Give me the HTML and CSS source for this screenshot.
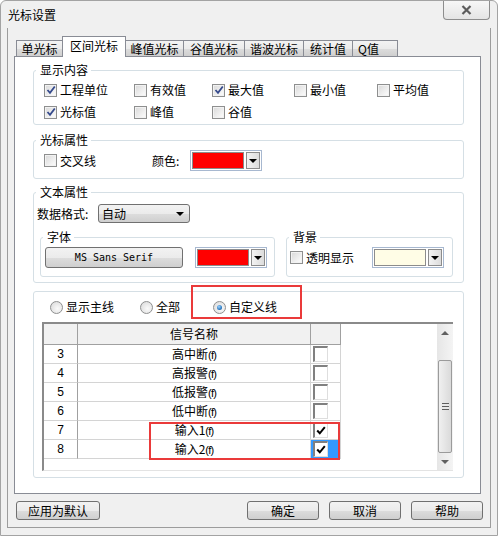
FILE: index.html
```html
<!DOCTYPE html>
<html lang="zh-CN">
  <head>
    <meta charset="UTF-8" />
    <title>光标设置</title>
    <link rel="stylesheet" href="styles.css">
  </head>
  <body>
    <div class="window">
      <div class="titlebar">
        <span class="title">光标设置</span>
        <button class="close-btn" type="button">
          <svg width="11" height="10" viewBox="0 0 11 10">
            <path d="M1.5 1 L9.5 9 M9.5 1 L1.5 9" stroke="#5c5c5c" stroke-width="2.2" fill="none" />
          </svg>
        </button>
      </div>

      <div class="client">
        <div class="tabs">
          <div class="tab tab-single">单光标</div>
          <div class="tab tab-range active">区间光标</div>
          <div class="tab tab-peak">峰值光标</div>
          <div class="tab tab-valley">谷值光标</div>
          <div class="tab tab-harm">谐波光标</div>
          <div class="tab tab-stat">统计值</div>
          <div class="tab tab-q">Q值</div>
        </div>

        <div class="panel">
          <!-- 显示内容 -->
          <div class="group group-show">
            <div class="group-title">显示内容</div>
            <div class="check-grid">
              <label class="check"><span class="cb checked"></span>工程单位</label>
              <label class="check"><span class="cb"></span>有效值</label>
              <label class="check"><span class="cb checked"></span>最大值</label>
              <label class="check"><span class="cb"></span>最小值</label>
              <label class="check"><span class="cb"></span>平均值</label>
              <label class="check"><span class="cb checked"></span>光标值</label>
              <label class="check"><span class="cb"></span>峰值</label>
              <label class="check"><span class="cb"></span>谷值</label>
            </div>
          </div>

          <!-- 光标属性 -->
          <div class="group group-cursor">
            <div class="group-title">光标属性</div>
            <div class="attr-row">
              <label class="check check-cross"><span class="cb"></span>交叉线</label>
              <span class="color-label">颜色:</span>
              <div class="color-combo">
                <span class="swatch swatch-red"></span>
                <span class="drop"><span class="tri"></span></span>
              </div>
            </div>
          </div>

          <!-- 文本属性 -->
          <div class="group group-text">
            <div class="group-title">文本属性</div>
            <div class="format-row">
              <span class="format-label">数据格式:</span>
              <div class="select">
                <span>自动</span>
                <span class="tri"></span>
              </div>
            </div>
            <div class="sub-row">
              <div class="group sub-font">
                <div class="group-title">字体</div>
                <div class="sub-body">
                  <button class="font-btn" type="button">MS Sans Serif</button>
                  <div class="color-combo combo-font">
                    <span class="swatch swatch-red"></span>
                    <span class="drop"><span class="tri"></span></span>
                  </div>
                </div>
              </div>
              <div class="group sub-bg">
                <div class="group-title">背景</div>
                <div class="sub-body">
                  <label class="check check-trans"><span class="cb"></span>透明显示</label>
                  <div class="color-combo combo-bg">
                    <span class="swatch swatch-yellow"></span>
                    <span class="drop"><span class="tri"></span></span>
                  </div>
                </div>
              </div>
            </div>
          </div>

          <!-- 信号列表 -->
          <div class="group group-lines">
            <div class="radio-row">
              <label class="radio-item r-main"><span class="radio"></span>显示主线</label>
              <label class="radio-item r-all"><span class="radio"></span>全部</label>
              <label class="radio-item"><span class="radio selected"></span>自定义线</label>
            </div>
            <div class="grid">
              <table class="signals">
                <colgroup>
                  <col class="c-num" />
                  <col class="c-name" />
                  <col class="c-chk" />
                </colgroup>
                <thead>
                  <tr>
                    <th></th>
                    <th>信号名称</th>
                    <th></th>
                  </tr>
                </thead>
                <tbody>
                  <tr>
                    <td class="num">3</td>
                    <td>高中断<span class="fx">(f)</span></td>
                    <td class="chk"><span class="gcb"></span></td>
                  </tr>
                  <tr>
                    <td class="num">4</td>
                    <td>高报警<span class="fx">(f)</span></td>
                    <td class="chk"><span class="gcb"></span></td>
                  </tr>
                  <tr>
                    <td class="num">5</td>
                    <td>低报警<span class="fx">(f)</span></td>
                    <td class="chk"><span class="gcb"></span></td>
                  </tr>
                  <tr>
                    <td class="num">6</td>
                    <td>低中断<span class="fx">(f)</span></td>
                    <td class="chk"><span class="gcb"></span></td>
                  </tr>
                  <tr>
                    <td class="num">7</td>
                    <td>输入1<span class="fx">(f)</span></td>
                    <td class="chk"><span class="gcb on"></span></td>
                  </tr>
                  <tr>
                    <td class="num">8</td>
                    <td>输入2<span class="fx">(f)</span></td>
                    <td class="chk current"><span class="gcb on"></span></td>
                  </tr>
                </tbody>
              </table>
              <div class="grid-space"></div>
              <div class="scrollbar">
                <div class="sb-btn"><span class="sb-up"></span></div>
                <div class="sb-track">
                  <div class="sb-thumb"><span class="grip"></span></div>
                </div>
                <div class="sb-btn"><span class="sb-down"></span></div>
              </div>
            </div>
          </div>
        </div>

        <div class="buttons">
          <button class="btn btn-default" type="button">应用为默认</button>
          <button class="btn btn-ok" type="button">确定</button>
          <button class="btn" type="button">取消</button>
          <button class="btn" type="button">帮助</button>
        </div>
      </div>

      <div class="mark mark-radio"></div>
      <div class="mark mark-rows"></div>
    </div>
  </body>
</html>
```

FILE: styles.css
```css
* {
  box-sizing: border-box;
}

body {
  margin: 0;
  font-family: "Noto Sans CJK SC", "Liberation Sans", sans-serif;
  font-size: 12px;
  line-height: 14px;
  color: #000;
  background: #fff;
}

button {
  font-family: inherit;
  font-size: 12px;
  color: #000;
  padding: 0;
}

.window {
  position: relative;
  width: 498px;
  height: 536px;
  border: 1px solid #a3a3a3;
  border-radius: 6px 6px 0 0;
  background: #f0f0f0;
  padding: 0 6px 7px;
}

.titlebar {
  height: 27px;
  display: flex;
  justify-content: space-between;
  padding-left: 1px;
}

.title {
  align-self: center;
  margin-top: 1px;
}

.close-btn {
  width: 47px;
  height: 19px;
  margin-right: 1px;
  border: 1px solid #8d8d8d;
  border-top: none;
  border-radius: 0 0 4px 4px;
  background: linear-gradient(#f7f7f7, #e4e4e4);
  display: flex;
  align-items: center;
  justify-content: center;
}

.client {
  height: 500px;
  border: 1px solid #9c9c9c;
  border-top: none;
  padding: 8px 0 7px;
}

/* tabs */
.tabs {
  display: flex;
  align-items: flex-end;
  height: 21px;
  padding-left: 8px;
  position: relative;
  z-index: 1;
}

.tab {
  height: 16px;
  margin-bottom: 1px;
  margin-right: -1px;
  border: 1px solid #898c95;
  border-bottom: none;
  background: linear-gradient(#f3f3f3, #ebebeb 50%, #dddddd 51%, #cfcfcf);
  text-align: center;
  line-height: 15px;
}

.tab.active {
  height: 21px;
  margin-bottom: 0;
  background: #fff;
  line-height: 18px;
  position: relative;
  z-index: 2;
}

.tab-single { width: 47px; }
.tab-range { width: 64px; }
.tab-peak { width: 59px; }
.tab-valley { width: 62px; }
.tab-harm { width: 60px; }
.tab-stat { width: 50px; }

.tab-q {
  width: 46px;
  text-align: left;
  padding-left: 5px;
}

.panel {
  margin: -1px 0 0 6px;
  width: 467px;
  height: 438px;
  background: #fff;
  border: 1px solid #898c95;
  padding: 0 16px 0 18px;
}

/* group boxes */
.group {
  border: 1px solid #d5dfe5;
  border-radius: 3px;
}

.group-title {
  width: fit-content;
  height: 14px;
  margin: -8px 0 0 2px;
  padding: 0 3px 0 4px;
  background: #fff;
}

.group-show {
  margin-top: 13px;
  padding-bottom: 3px;
}

.group-cursor {
  margin-top: 15px;
  padding-bottom: 7px;
}

.group-text {
  margin-top: 13px;
  padding-bottom: 5px;
}

.group-lines {
  margin-top: 8px;
  padding-bottom: 6px;
}

.check-grid {
  display: grid;
  grid-template-columns: 90px 78px 82px 83px auto;
  grid-auto-rows: 18px;
  row-gap: 4px;
  margin-top: 4px;
  padding-left: 10px;
}

.check {
  display: flex;
  align-items: center;
  gap: 3px;
  white-space: nowrap;
}

.cb {
  width: 13px;
  height: 13px;
  flex: none;
  border: 1px solid #8e8f8f;
  background: linear-gradient(135deg, #d8d8d8, #f7f7f7 80%);
  box-shadow: inset 0 0 0 1px #f2f2f2;
  display: inline-flex;
  align-items: center;
  justify-content: center;
}

.cb.checked::after {
  content: "";
  width: 10px;
  height: 10px;
  background: url("data:image/svg+xml;utf8,<svg xmlns='http://www.w3.org/2000/svg' width='10' height='10'><path d='M1.5 5 L4 7.8 L8.8 1.5' stroke='%23354a8c' stroke-width='1.8' fill='none'/></svg>") no-repeat;
}

.attr-row {
  display: flex;
  align-items: center;
  height: 21px;
  margin-top: 3px;
  padding-left: 10px;
}

.check-cross {
  width: 108px;
}

.color-label {
  width: 38px;
}

.color-combo {
  width: 72px;
  height: 21px;
  border: 1px solid #a7b8d0;
  padding: 1px;
  display: flex;
  gap: 2px;
}

.swatch {
  flex: 1;
  border: 1px solid #8c8c8c;
}

.swatch-red {
  background: #ff0000;
}

.swatch-yellow {
  background: #fffde6;
}

.drop {
  width: 14px;
  border: 1px solid #8c8c8c;
  background: linear-gradient(90deg, #f3f3f3, #dcdcdc);
  display: flex;
  align-items: center;
  justify-content: center;
}

.tri {
  width: 0;
  height: 0;
  border-left: 4px solid transparent;
  border-right: 4px solid transparent;
  border-top: 4px solid #000;
}

.format-row {
  display: flex;
  align-items: center;
  height: 19px;
  margin-top: 5px;
  padding-left: 3px;
}

.format-label {
  width: 61px;
}

.select {
  width: 92px;
  height: 19px;
  border: 1px solid #707070;
  border-radius: 3px;
  background: linear-gradient(#f2f2f2, #ebebeb 50%, #dddddd 51%, #cfcfcf);
  display: flex;
  align-items: center;
  justify-content: space-between;
  padding: 0 5px 0 3px;
}

.sub-row {
  display: flex;
  gap: 11px;
  margin-top: 14px;
  padding-left: 6px;
}

.sub-font {
  width: 235px;
  height: 40px;
}

.sub-bg {
  width: 167px;
  height: 40px;
}

.sub-body {
  display: flex;
  align-items: center;
  height: 21px;
  margin-top: 3px;
  padding-left: 4px;
}

.font-btn {
  width: 138px;
  height: 21px;
  margin-right: 12px;
  border: 1px solid #707070;
  border-radius: 3px;
  background: linear-gradient(#f2f2f2, #ebebeb 50%, #dddddd 51%, #cfcfcf);
  font-family: "DejaVu Sans Mono", "Liberation Mono", monospace;
  font-size: 10px;
}

.check-trans {
  width: 82px;
  margin-left: -1px;
}

/* radios */
.radio-row {
  display: flex;
  align-items: center;
  height: 16px;
  margin-top: 7px;
  padding-left: 16px;
}

.radio-item {
  display: flex;
  align-items: center;
  gap: 3px;
}

.r-main {
  width: 90px;
}

.r-all {
  width: 73px;
}

.radio {
  width: 13px;
  height: 13px;
  border: 1px solid #8e8f8f;
  border-radius: 50%;
  background: radial-gradient(circle at 60% 60%, #fafafa, #d8d8d8);
  display: inline-flex;
  align-items: center;
  justify-content: center;
}

.radio.selected::after {
  content: "";
  width: 5px;
  height: 5px;
  border-radius: 50%;
  background: radial-gradient(circle at 40% 35%, #9fd4ff, #1f6fb8 70%, #0d3d73);
}

/* signal grid */
.grid {
  display: flex;
  height: 149px;
  margin: 7px 0 0 8px;
  width: 411px;
  border-top: 2px solid #8a8a8a;
  border-left: 2px solid #8a8a8a;
  border-bottom: 1px solid #e3e3e3;
}

.signals {
  width: 297px;
  table-layout: fixed;
  border-collapse: separate;
  border-spacing: 0;
  align-self: flex-start;
}

.c-num { width: 34px; }
.c-name { width: 233px; }
.c-chk { width: 30px; }

.signals th,
.signals td {
  padding: 0;
  text-align: center;
  font-weight: normal;
  border-right: 1px solid #d4d4d4;
  border-bottom: 1px solid #d4d4d4;
  white-space: nowrap;
}

.signals th {
  height: 21px;
  background: #f1f1f1;
  border-right-color: #a0a0a0;
  border-bottom-color: #a0a0a0;
}

.signals td {
  height: 19px;
}

.signals td.num {
  border-right-color: #a0a0a0;
  font-family: "Liberation Sans", sans-serif;
}

.fx {
  font-family: "Liberation Sans", sans-serif;
  font-size: 11px;
  letter-spacing: -0.8px;
}

.signals td.chk {
  text-align: left;
  vertical-align: top;
  padding: 1px 0 0 2px;
}

.signals td.current {
  background: #3399ff;
}

.gcb {
  display: flex;
  align-items: center;
  justify-content: center;
  width: 15px;
  height: 16px;
  background: #fff;
  border-top: 2px solid #808080;
  border-left: 2px solid #808080;
  border-right: 1px solid #dedede;
  border-bottom: 1px solid #dedede;
}

.gcb.on::after {
  content: "";
  width: 10px;
  height: 9px;
  background: url("data:image/svg+xml;utf8,<svg xmlns='http://www.w3.org/2000/svg' width='10' height='9'><path d='M1.2 4.5 L3.8 7.3 L8.8 1.2' stroke='%23000' stroke-width='2' fill='none'/></svg>") no-repeat;
}

.grid-space {
  flex: 1;
  background: #fff;
}

.scrollbar {
  width: 16px;
  display: flex;
  flex-direction: column;
  background: linear-gradient(90deg, #e6e6e6, #f4f4f4);
}

.sb-btn {
  height: 17px;
  display: flex;
  align-items: center;
  justify-content: center;
}

.sb-up {
  border-left: 4px solid transparent;
  border-right: 4px solid transparent;
  border-bottom: 4px solid #606060;
}

.sb-down {
  border-left: 4px solid transparent;
  border-right: 4px solid transparent;
  border-top: 4px solid #606060;
}

.sb-track {
  flex: 1;
  padding-top: 19px;
}

.sb-thumb {
  height: 93px;
  margin: 0 1px;
  border: 1px solid #9b9b9b;
  border-radius: 2px;
  background: linear-gradient(90deg, #f0f0f0, #dadada);
  display: flex;
  align-items: center;
  justify-content: center;
}

.grip {
  width: 7px;
  height: 7px;
  background: repeating-linear-gradient(#5e5e5e 0 1px, #e8e8e8 1px 3px);
}

/* bottom buttons */
.buttons {
  display: flex;
  gap: 10px;
  height: 19px;
  margin-top: 7px;
  padding: 0 7px 0 8px;
}

.btn {
  width: 72px;
  height: 19px;
  border: 1px solid #707070;
  border-radius: 3px;
  background: linear-gradient(#f2f2f2, #ebebeb 50%, #dddddd 51%, #cfcfcf);
  line-height: 17px;
}

.btn-default {
  width: 84px;
}

.btn-ok {
  margin-left: auto;
}

/* red annotation frames */
.mark {
  position: absolute;
  border: 2px solid #ea3a3a;
  pointer-events: none;
}

.mark-radio {
  left: 190px;
  top: 284px;
  width: 111px;
  height: 34px;
}

.mark-rows {
  left: 148px;
  top: 421px;
  width: 191px;
  height: 38px;
}
```
